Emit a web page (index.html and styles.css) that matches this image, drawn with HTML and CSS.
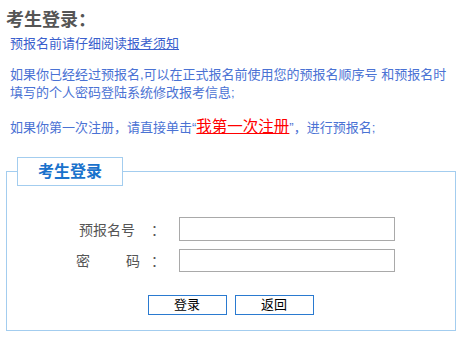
FILE: index.html
```html
<!DOCTYPE html>
<html lang="zh-CN">
<head>
<meta charset="utf-8">
<title>考生登录</title>
<link rel="stylesheet" href="styles.css">
</head>
<body>
<div class="page">
  <h1 class="title">考生登录：</h1>
  <p class="notice">预报名前请仔细阅读<a class="notice-link" href="#">报考须知</a></p>
  <p class="info">如果你已经经过预报名,可以在正式报名前使用您的预报名顺序号 和预报名时填写的个人密码登陆系统修改报考信息;</p>
  <p class="info info-first">如果你第一次注册，请直接单击“<a class="reg-link" href="#">我第一次注册</a>”，进行预报名;</p>
  <fieldset class="login">
    <legend class="login-legend"><span class="legend-text">考生登录</span></legend>
    <div class="row">
      <div class="label"><span class="name name-a">预报名号</span></div>
      <span class="colon">：</span>
      <input class="field" type="text">
    </div>
    <div class="row">
      <div class="label"><span class="name name-b"><span>密</span><span>码</span></span></div>
      <span class="colon">：</span>
      <input class="field" type="password">
    </div>
    <div class="actions">
      <button class="btn" type="button">登录</button>
      <button class="btn" type="button">返回</button>
    </div>
  </fieldset>
</div>
</body>
</html>
```

FILE: styles.css
```css
* { box-sizing: border-box; }
html, body { margin: 0; padding: 0; background: #fff; }
body {
  font-family: "Liberation Sans", "Noto Sans CJK SC", sans-serif;
  font-size: 13px;
  color: #3366cc;
}
.page { padding: 8px 12px 0 6px; width: 467px; }
.title {
  margin: 0;
  font-size: 18px;
  line-height: 24px;
  font-weight: bold;
  color: #555;
}
.notice {
  margin: 2px 0 0 4px;
  line-height: 20px;
  font-size: 13px;
  color: #3a5fcd;
}
.notice-link { color: #3a5fcd; text-decoration: underline; }
.info {
  margin: 12px 0 0 4px;
  line-height: 18px;
  color: #4a72d4;
}
.info-first { margin-top: 16px; }
.reg-link {
  color: #ff0000;
  font-size: 15.5px;
  text-decoration: underline;
}
.login {
  margin: 20px 0 0 0;
  width: 450px;
  padding: 31px 0 15px 0;
  border: 1px solid #a3cdef;
}
.login-legend {
  margin-left: 10px;
  width: 106px;
  height: 29px;
  padding: 0;
  border: 1px solid #a3cdef;
  text-align: left;
}
.legend-text {
  display: block;
  text-align: center;
  font-size: 16px;
  line-height: 27px;
  font-weight: bold;
  color: #1a72cc;
}
.row {
  display: flex;
  align-items: center;
  height: 24px;
  margin-bottom: 7px;
  color: #555;
  font-size: 14px;
}
.label { width: 144px; display: flex; }
.name-a { margin-left: 72px; width: 56px; }
.name-b { margin-left: 69px; width: 64px; display: flex; justify-content: space-between; }
.colon { width: 28px; }
.field {
  width: 216px;
  height: 24px;
  border: 1px solid #a9a9a9;
  padding: 0 4px;
  font-size: 13px;
}
.row + .row .field { height: 23px; }
.actions {
  display: flex;
  justify-content: center;
  gap: 8px;
  margin-top: 23px;
  padding-right: 1px;
}
.btn {
  width: 79px;
  height: 20px;
  padding: 0;
  background: #fff;
  border: 1px solid #2a7ad0;
  font-family: "Liberation Sans", "Noto Sans CJK SC", sans-serif;
  font-size: 13px;
  line-height: 18px;
  color: #000;
}
```
